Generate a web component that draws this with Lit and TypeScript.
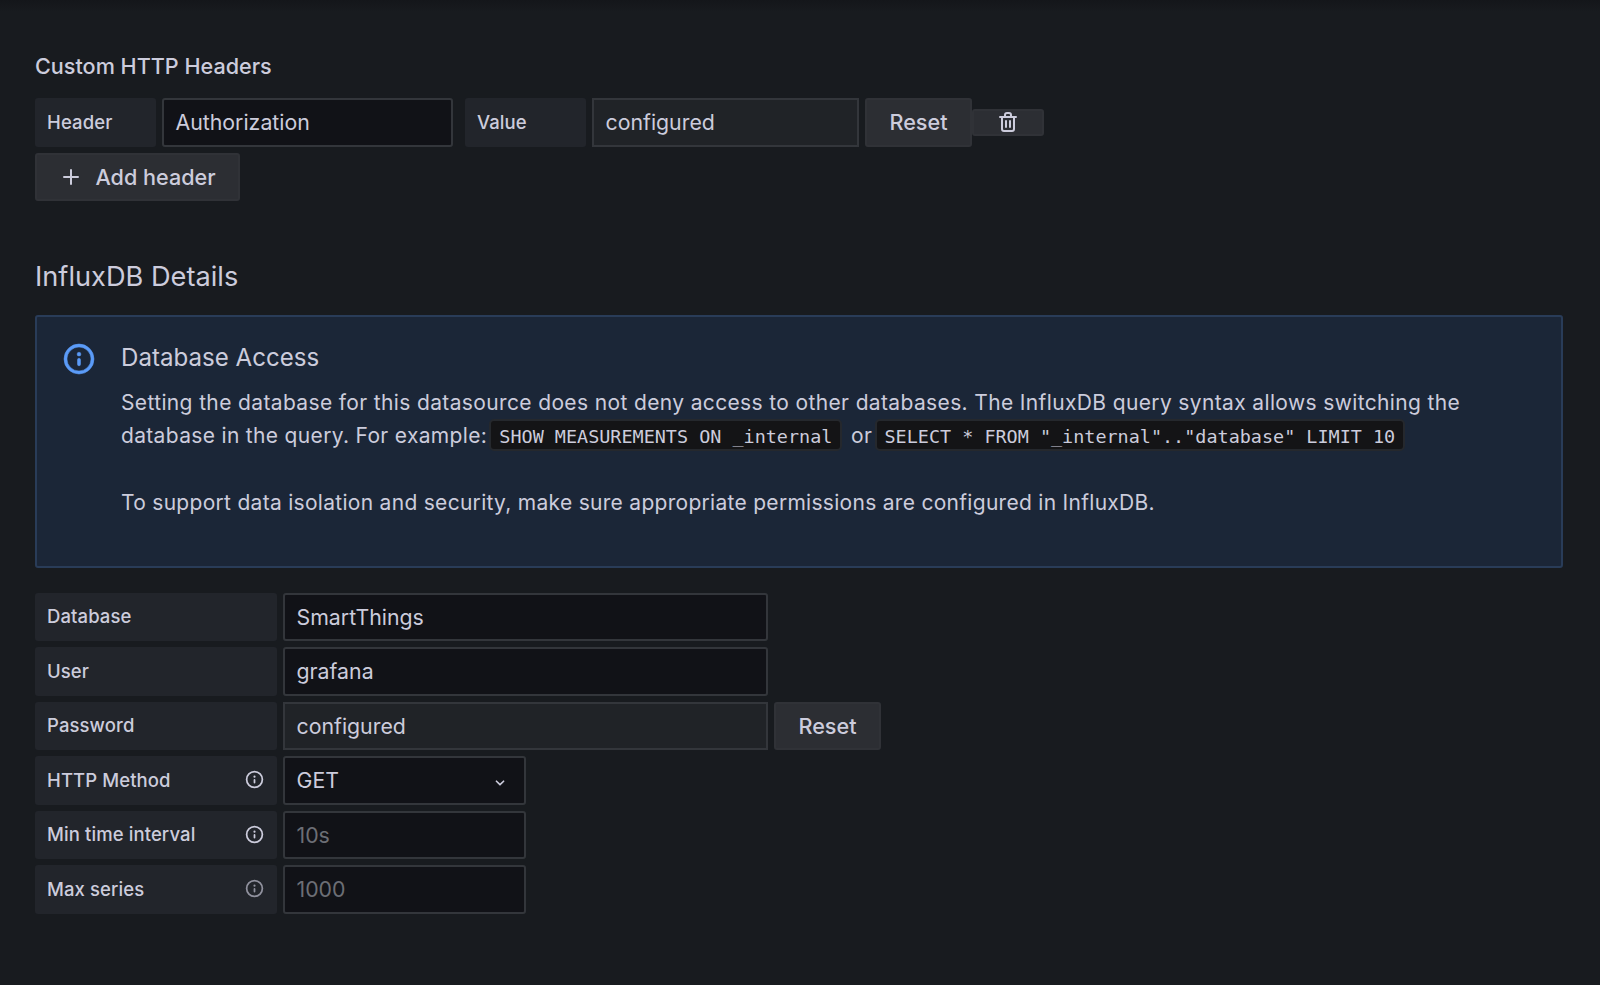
import { LitElement, html, css, svg } from "lit";
import { customElement } from "lit/decorators.js";

const icon = (d: string, cls: string) =>
  html`<svg class=${cls} viewBox="0 0 24 24" fill="currentColor" aria-hidden="true">${svg`<path d=${d}></path>`}</svg>`;

const INFO = "M12,2A10,10,0,1,0,22,12,10.01114,10.01114,0,0,0,12,2Zm0,18a8,8,0,1,1,8-8A8.00917,8.00917,0,0,1,12,20Zm0-8.5a1,1,0,0,0-1,1v3a1,1,0,0,0,2,0v-3A1,1,0,0,0,12,11.5Zm0-4a1.25,1.25,0,1,0,1.25,1.25A1.25,1.25,0,0,0,12,7.5Z";
const PLUS = "M19,11H13V5a1,1,0,0,0-2,0v6H5a1,1,0,0,0,0,2h6v6a1,1,0,0,0,2,0V13h6a1,1,0,0,0,0-2Z";
const TRASH = "M10,18a1,1,0,0,0,1-1V11a1,1,0,0,0-2,0v6A1,1,0,0,0,10,18ZM20,6H16V5a3,3,0,0,0-3-3H11A3,3,0,0,0,8,5V6H4A1,1,0,0,0,4,8H5V19a3,3,0,0,0,3,3h8a3,3,0,0,0,3-3V8h1a1,1,0,0,0,0-2ZM10,5a1,1,0,0,1,1-1h2a1,1,0,0,1,1,1V6H10Zm7,14a1,1,0,0,1-1,1H8a1,1,0,0,1-1-1V8H17Zm-3-1a1,1,0,0,0,1-1V11a1,1,0,0,0-2,0v6A1,1,0,0,0,14,18Z";
const DOWN = "M17,9.17a1,1,0,0,0-1.41,0L12,12.71,8.46,9.17a1,1,0,0,0-1.41,0,1,1,0,0,0,0,1.42l4.24,4.24a1,1,0,0,0,1.42,0L17,10.59A1,1,0,0,0,17,9.17Z";

@customElement("app-root")
export class AppRoot extends LitElement {
  static styles = css`
    :host {
      display: block;
      box-sizing: border-box;
      min-height: 985px;
      background: linear-gradient(#14161a, #181b1f 12px);
      color: #ccccdc;
      font-family: Inter, "Noto Sans", sans-serif;
      padding: 51.5px 37px 0 35px;
    }
    * { box-sizing: border-box; }
    .h-sm { font-size: 21.6px; line-height: 28px; font-weight: 500; letter-spacing: 0; margin: 0 0 18.5px; }
    .row { display: flex; align-items: center; height: 48.5px; }
    .rows { display: flex; flex-direction: column; gap: 6px; }
    .rows .row, .rows .label, .rows .input, .rows .btn { height: 48.5px; }
    .label {
      display: flex; align-items: center; justify-content: space-between;
      height: 48.5px; padding: 0 12px 1px; margin-right: 6px;
      background: #22252b; border-radius: 3px;
      font-size: 18.5px; font-weight: 500; letter-spacing: 0.1px;
    }
    .l-121 { width: 121px; }
    .l-242 { width: 242px; }
    .input {
      display: flex; align-items: center; height: 48.5px; padding: 0 11.5px;
      background: #111217; border: 2px solid #33363b; border-radius: 3px;
      font-size: 21.3px; color: #ccccdc;
    }
    .input.ro { background: #202327; border-radius: 0; }
    .input.ph { color: #6c6e75; }
    .w-291 { width: 291px; }
    .w-267 { width: 267px; margin-right: 6px; }
    .w-485 { width: 485px; }
    .w-243 { width: 243px; justify-content: space-between; }
    .gap-left { margin-left: 12px; }
    .btn {
      display: inline-flex; align-items: center; justify-content: center; height: 48.5px;
      background: #2c2e33; border: 2px solid #303237; border-radius: 3px;
      font-size: 21.6px; font-weight: 500; color: #ccccdc;
    }
    .reset { width: 107px; }
    .reset-gap { margin-left: 6px; }
    .trash { width: 72px; height: 27px; }
    .add { width: 205px; gap: 12px; margin-top: 6px; }
    .i-24 { width: 24px; height: 24px; flex: none; }
    .i-21 { width: 21px; height: 21px; flex: none; }
    .i-36 { width: 36px; height: 36px; flex: none; color: #5b9bf8; margin-top: -1px; stroke: currentColor; stroke-width: 0.35; }
    .chev { width: 20px; height: 20px; flex: none; margin: 5px 3px 0 0; }
    .faint { opacity: 0.65; }
    .h-md { font-size: 27.2px; line-height: 36px; font-weight: 400; margin: 57.5px 0 20px; }
    .alert {
      display: flex; gap: 24px; height: 253.5px; padding: 25px 24px;
      background: #1b2637; border: 2px solid #293c58; border-radius: 3px;
    }
    .alert-title { font-size: 24.1px; line-height: 32px; margin-bottom: 12px; }
    .alert-body { font-size: 21px; line-height: 33.5px; }
    .alert-body > div { height: 33.5px; white-space: nowrap; }
    .ls-1 { letter-spacing: 0.363px; }
    .ls-2 { letter-spacing: 0.33px; }
    .ls-3 { letter-spacing: 0.29px; }
    code {
      display: inline-block; height: 32px; line-height: 32px; padding: 0 8px;
      margin: 0 2.5px 0 -4px;
      background: #141416; border: 2px solid #25282d; border-radius: 5px;
      font-family: "DejaVu Sans Mono", "Liberation Mono", monospace;
      font-size: 18.45px; letter-spacing: 0; vertical-align: 0;
    }
    .form { margin-top: 24.5px; }
  `;

  render() {
    return html`
      <h2 class="h-sm">Custom HTTP Headers</h2>
      <div class="row">
        <div class="label l-121">Header</div>
        <div class="input w-291">Authorization</div>
        <div class="label l-121 gap-left">Value</div>
        <div class="input ro w-267">configured</div>
        <div class="btn reset">Reset</div>
        <div class="btn trash">${icon(TRASH, "i-24")}</div>
      </div>
      <div class="btn add">${icon(PLUS, "i-24")}<span>Add header</span></div>

      <h3 class="h-md">InfluxDB Details</h3>
      <div class="alert">
        ${icon(INFO, "i-36")}
        <div>
          <div class="alert-title">Database Access</div>
          <div class="alert-body">
            <div class="ls-1">Setting the database for this datasource does not deny access to other databases. The InfluxDB query syntax allows switching the</div>
            <div class="ls-2">database in the query. For example: <code>SHOW MEASUREMENTS ON _internal</code> or <code>SELECT * FROM "_internal".."database" LIMIT 10</code></div>
            <div></div>
            <div class="ls-3">To support data isolation and security, make sure appropriate permissions are configured in InfluxDB.</div>
          </div>
        </div>
      </div>

      <div class="rows form">
        <div class="row"><div class="label l-242">Database</div><div class="input w-485">SmartThings</div></div>
        <div class="row"><div class="label l-242">User</div><div class="input w-485">grafana</div></div>
        <div class="row"><div class="label l-242">Password</div><div class="input ro w-485">configured</div><div class="btn reset reset-gap">Reset</div></div>
        <div class="row"><div class="label l-242">HTTP Method${icon(INFO, "i-21")}</div><div class="input w-243">GET${icon(DOWN, "chev")}</div></div>
        <div class="row"><div class="label l-242">Min time interval${icon(INFO, "i-21")}</div><div class="input ph w-243">10s</div></div>
        <div class="row"><div class="label l-242">Max series${icon(INFO, "i-21 faint")}</div><div class="input ph w-243">1000</div></div>
      </div>
    `;
  }
}
